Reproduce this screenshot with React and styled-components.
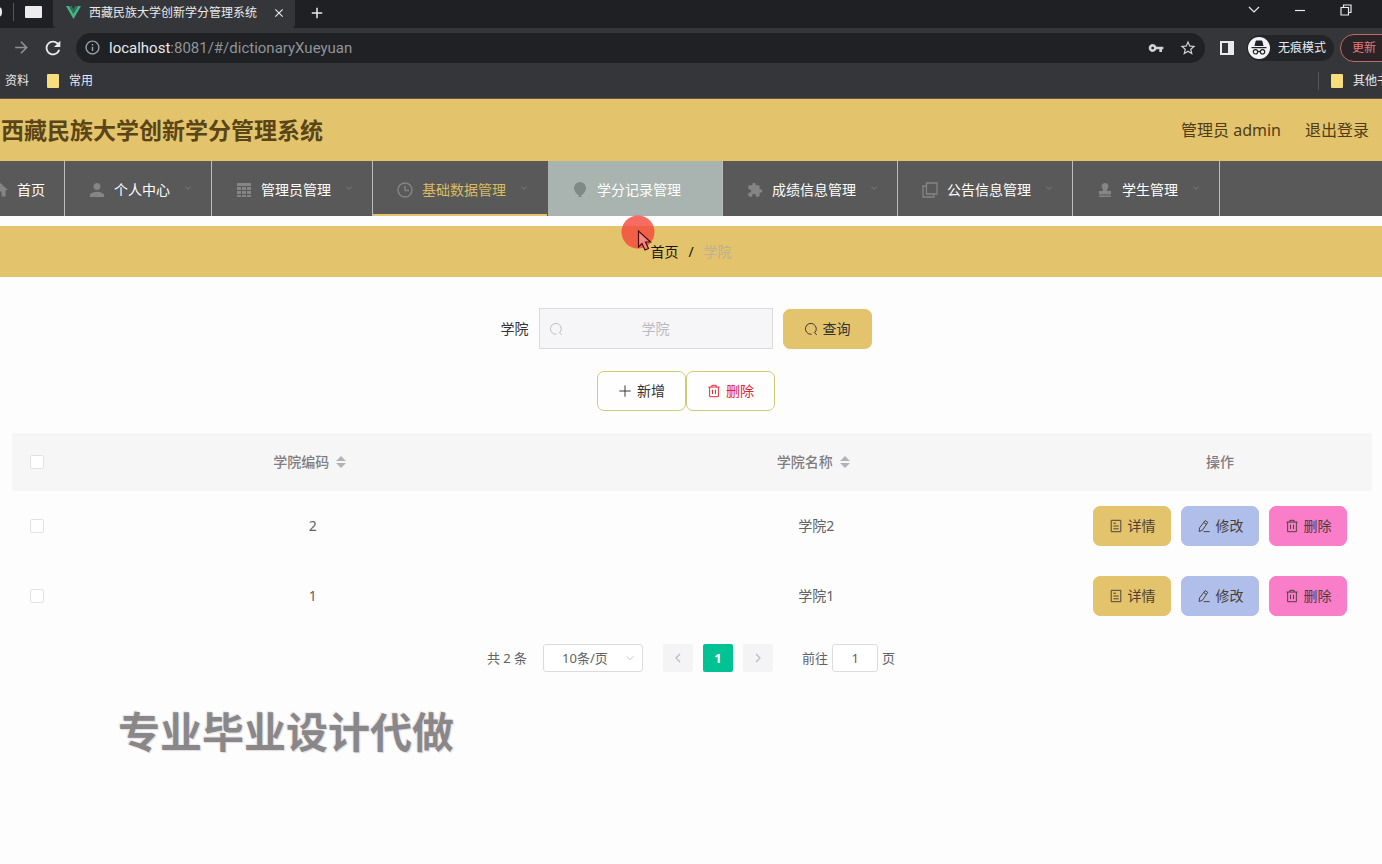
import React, { useState } from "react";
import styled, { createGlobalStyle, css } from "styled-components";
import {
    MdAdd,
    MdArrowForward,
    MdClose,
    MdExtension,
    MdHome,
    MdInfoOutline,
    MdPerson,
    MdRefresh,
    MdStarBorder,
    MdVpnKey,
} from "react-icons/md";

const gold = "#e3c36c";

const GlobalStyle = createGlobalStyle`
    * {
        box-sizing: border-box;
    }
    body {
        margin: 0;
        background-color: #fefdfe;
        color: #333;
        font-family: "Noto Sans", "Noto Sans CJK SC", sans-serif;
        font-size: 14px;
        line-height: 20px;
        overflow-x: hidden;
    }
    button, input, select {
        font: inherit;
        color: inherit;
        margin: 0;
    }
    button {
        cursor: pointer;
    }
    svg {
        display: block;
        flex: none;
    }
    a {
        color: inherit;
        text-decoration: none;
    }
`;

/* browser window */

const Browser = styled.div`
    overflow: hidden;
    white-space: nowrap;
    color: #e8eaed;
    font-size: 12px;
    background-color: #35363a;
    border-bottom: 1px solid #6b5146;
`;

const TabStrip = styled.div`
    display: flex;
    align-items: stretch;
    height: 28px;
    background-color: #1e2023;
`;

const OldTab = styled.div`
    display: flex;
    align-items: center;
    gap: 11px;
    width: 53px;
    padding-bottom: 4px;
`;

const TabDot = styled.span`
    width: 8px;
    height: 10px;
    margin-left: -6px;
    border: 2px solid #e8eaed;
    border-radius: 5px;
`;

const TabLine = styled.span`
    flex: none;
    width: 1px;
    height: 18px;
    background-color: #55575b;
`;

const TabPage = styled.span`
    width: 17px;
    height: 12px;
    border-radius: 1px;
    background-color: #ececee;
`;

const Tab = styled.div`
    display: flex;
    align-items: center;
    width: 242px;
    padding: 0 9px 3px 13px;
    border-radius: 0 0 4px 4px;
    background-color: #35363a;
`;

const TabTitle = styled.span`
    flex: 1;
    margin-left: 8px;
`;

const IconButton = styled.button`
    display: flex;
    align-items: center;
    padding: 0;
    border: none;
    background: none;
    color: ${({ $dim }) => ($dim ? "#8d9094" : "#e8eaed")};
`;

const NewTab = styled(IconButton)`
    margin-left: 13px;
    padding-bottom: 3px;
`;

const WindowButtons = styled.div`
    display: flex;
    align-items: center;
    gap: 34px;
    margin-left: auto;
    padding: 0 30px 9px 0;
`;

const Toolbar = styled.div`
    display: flex;
    align-items: center;
    height: 39px;
    padding-left: 12px;
`;

const Arrows = styled.div`
    display: flex;
    gap: 11px;
`;

const Omnibox = styled.div`
    display: flex;
    align-items: center;
    flex: 1;
    gap: 15px;
    height: 30px;
    margin: 0 14px 0 12px;
    padding: 0 8px;
    border-radius: 15px;
    background-color: #1f2124;
`;

const Url = styled.span`
    flex: 1;
    margin-left: -7px;
    color: #909499;
    font-family: Roboto, sans-serif;
    font-size: 15px;

    b {
        color: #e8eaed;
        font-weight: 400;
    }
`;

const Incognito = styled.div`
    display: flex;
    align-items: center;
    gap: 7px;
    height: 26px;
    margin-left: 12px;
    padding-right: 8px;
    border-radius: 13px;
    background-color: #222427;
`;

const Update = styled.button`
    width: 62px;
    height: 28px;
    margin: 0 -20px 0 6px;
    padding: 0 0 0 11px;
    border: 1px solid #c0686b;
    border-radius: 14px;
    background-color: #2a2427;
    color: #e5787a;
    text-align: left;
`;

const Bookmarks = styled.div`
    display: flex;
    align-items: center;
    height: 31px;
    padding: 0 0 3px 5px;
`;

const Folder = styled.span`
    flex: none;
    width: 12px;
    height: 14px;
    margin: 0 10px 0 ${({ $first }) => ($first ? 18 : 12)}px;
    border-radius: 1px;
    background-color: #f8dd7c;
`;

const OtherBookmarks = styled.div`
    display: flex;
    align-items: center;
    width: 64px;
    margin-left: auto;
`;

/* site header and menu */

const Header = styled.header`
    display: flex;
    justify-content: space-between;
    align-items: center;
    height: 62px;
    padding: 0 13px 0 1px;
    background-color: ${gold};
    color: #5a4517;
`;

const Title = styled.h1`
    margin: 0;
    font-size: 23px;
    line-height: 32px;
    font-weight: 700;
`;

const HeaderLinks = styled.div`
    display: flex;
    gap: 24px;
    font-size: 16px;
    color: #4f3d18;
`;

const Nav = styled.nav`
    display: flex;
    height: 55px;
    background-color: #595959;
    overflow: hidden;
`;

const NavList = styled.div`
    display: flex;
    margin-left: -32px;
`;

const NavItem = styled.a`
    display: flex;
    align-items: center;
    padding: 3px 19px 0 24px;
    border-right: 1px solid #bdbdbd;
    color: #fff;
    white-space: nowrap;

    svg:first-child {
        margin-right: 9px;
        color: #858585;
    }

    ${({ $active }) => $active && css`
        border-right-color: transparent;
        box-shadow: inset 0 -2px 0 ${gold};
        color: #d9bb62;
    `}

    ${({ $hover }) => $hover && css`
        background-color: #a9b3af;

        svg:first-child {
            color: #7f8a87;
        }
    `}
`;

const NavArrow = styled.span`
    width: 22px;
    padding: 0 0 4px 14px;
    color: #96506a;
    visibility: ${({ $hidden }) => ($hidden ? "hidden" : "visible")};
`;

const Breadcrumb = styled.div`
    position: relative;
    display: flex;
    justify-content: center;
    align-items: center;
    gap: 10px;
    height: 51px;
    margin-top: 10px;
    background-color: ${gold};
    color: #17140c;
`;

const Current = styled.span`
    color: #bfb090;
`;

const Pointer = styled.svg`
    position: absolute;
    top: -11px;
    left: calc(50% - 70px);
`;

/* content */

const Content = styled.main`
    padding: 31px 10px 0 12px;
`;

const FormRow = styled.form`
    display: flex;
    justify-content: center;
    align-items: center;
    margin-bottom: 22px;
    padding-right: 12px;
`;

const Label = styled.label`
    margin-right: 10px;
`;

const SearchBox = styled.div`
    display: flex;
    align-items: center;
    width: 234px;
    height: 41px;
    margin-right: 10px;
    padding: 0 9px;
    border: 1px solid #dcdade;
    background-color: #f6f5f7;
    color: #bcbabe;
`;

const SearchInput = styled.input`
    flex: 1;
    min-width: 0;
    padding: 0 14px 0 0;
    border: none;
    outline: none;
    background: none;
    text-align: center;

    &::placeholder {
        color: #bcbabe;
        opacity: 1;
    }
`;

const Button = styled.button`
    display: flex;
    justify-content: center;
    align-items: center;
    gap: 5px;
    width: 89px;
    height: 40px;
    padding: 0;
    border: 1px solid ${({ $bg }) => $bg || "#cfcb78"};
    border-radius: 7px;
    background-color: ${({ $bg }) => $bg || "#fffefe"};
    color: ${({ $color }) => $color || "#333"};
`;

const RowButton = styled(Button)`
    width: 78px;
    color: #4a4038;
`;

const Table = styled.table`
    width: 100%;
    border-collapse: collapse;
    table-layout: fixed;
    color: #606266;
    text-align: center;
`;

const Th = styled.th`
    width: ${({ $width }) => $width || "auto"};
    height: 58px;
    padding: 0;
    background-color: #f7f6f7;
    color: #7f7d80;
    font-weight: 500;
`;

const Td = styled.td`
    height: 70px;
    padding: 0;
`;

const Sortable = styled.div`
    display: flex;
    justify-content: center;
    align-items: center;
    gap: 7px;
    padding-right: 6px;
`;

const Check = styled.input`
    appearance: none;
    display: block;
    width: 14px;
    height: 14px;
    margin: 0 auto;
    border: 1px solid #e3e1e4;
    border-radius: 2px;
    background-color: #fff;

    &:checked {
        background-color: #00c292;
    }
`;

const Actions = styled.div`
    display: flex;
    justify-content: center;
    gap: 10px;
`;

const Pagination = styled.div`
    display: flex;
    justify-content: center;
    align-items: center;
    margin-top: 13px;
    padding-right: 2px;
    color: #606266;
    font-size: 13px;
`;

const SelectBox = styled.div`
    display: grid;
    align-items: center;
    width: 100px;
    margin: 0 20px 0 16px;

    > * {
        grid-area: 1 / 1;
    }
    svg {
        justify-self: end;
        margin-right: 8px;
        color: #c0c4cc;
        pointer-events: none;
    }
`;

const PageSize = styled.select`
    appearance: none;
    width: 100%;
    height: 28px;
    padding: 0 18px;
    border: 1px solid #dddbdf;
    border-radius: 3px;
    background-color: #fff;
`;

const PageButton = styled.button`
    display: flex;
    justify-content: center;
    align-items: center;
    width: 30px;
    height: 28px;
    margin-right: 10px;
    padding: 0;
    border: none;
    border-radius: 2px;
    background-color: ${({ $active }) => ($active ? "#00c292" : "#f4f3f5")};
    color: ${({ $active }) => ($active ? "#fff" : "#b9bbc0")};
    font-weight: 700;
`;

const Jump = styled.label`
    display: flex;
    align-items: center;
    gap: 4px;
    margin-left: 19px;
`;

const JumpInput = styled.input`
    width: 46px;
    height: 28px;
    padding: 0;
    border: 1px solid #dddbdf;
    border-radius: 3px;
    background-color: #fff;
    text-align: center;
`;

const Slogan = styled.p`
    margin: 28px 0 0 106px;
    color: #8a8789;
    font-size: 42px;
    line-height: 64px;
    font-weight: 700;
    text-shadow: 0 0 2px #fff, 1px 1px 1px #d4d2d4, -1px -1px 1px #e4e2e4;
`;

/* icons */

const Line = ({ size = 14, children, ...rest }) => (
    <svg width={size} height={size} viewBox="0 0 16 16" fill="none" stroke="currentColor" strokeWidth="1.1" {...rest}>
        {children}
    </svg>
);

const SearchIcon = () => (
    <Line>
        <path d="M12.200 12.200A6.200 6.200 0 1 0 7.600 14h1.200M11.600 11.800l3 3" />
    </Line>
);

const PlusIcon = () => <Line><path d="M8 1.500v13M1.500 8h13" /></Line>;

const TrashIcon = () => (
    <Line>
        <path d="M1.500 3.500h13M5.500 3.500v-2h5v2M3 3.500v11h10v-11M6.300 6.500v5M9.700 6.500v5" />
    </Line>
);

const DetailIcon = () => (
    <Line>
        <path d="M2.500 1.500h11v13h-11zM5 4.800h3M5 8h6M5 11.200h6" />
    </Line>
);

const EditIcon = () => (
    <Line>
        <path d="M9.300 1.800l3 2-6 9-3.900 1.600.5-4.200zM8 4.200l3 2M7.500 14.400h7" />
    </Line>
);

const SortIcon = () => (
    <svg width="10" height="12" viewBox="0 0 10 12" fill="#b4b2b6">
        <path d="M5 0l5 5H0zM5 12L0 7h10z" />
    </svg>
);

const Chevron = ({ d, size = 12 }) => (
    <svg width={size} height={size} viewBox="0 0 12 12" fill="none" stroke="currentColor" strokeWidth="1.2">
        <path d={d} />
    </svg>
);

const down = "M2 4l4 4 4-4";

const GridIcon = () => (
    <svg width="16" height="16" viewBox="0 0 16 16" fill="currentColor">
        <path d="M1 1h14v3H1zM1 5h4v3H1zM6 5h4v3H6zM11 5h4v3h-4zM1 9h4v3H1zM6 9h4v3H6zM11 9h4v3h-4zM1 13h4v2H1zM6 13h4v2H6zM11 13h4v2h-4z" />
    </svg>
);

const ClockIcon = () => (
    <Line size={16} strokeWidth="1.4">
        <circle cx="8" cy="8" r="7" />
        <path d="M8 3.800V8.500h4" />
    </Line>
);

const BalloonIcon = () => (
    <svg width="16" height="16" viewBox="0 0 16 16" fill="currentColor">
        <path d="M8 0a6 6 0 0 1 6 6c0 3.500-2.500 6-5 7.500l1 1.500H6l1-1.500C4.500 12 2 9.500 2 6a6 6 0 0 1 6-6z" />
    </svg>
);

const CopyIcon = () => (
    <Line size={16} strokeWidth="1.3">
        <path d="M4.500 1h10.500v11H4.500zM4.500 4H1v11h11v-3" />
    </Line>
);

const StampIcon = () => (
    <svg width="16" height="16" viewBox="0 0 16 16" fill="currentColor">
        <path d="M8 1a3.500 3.500 0 0 1 2.200 6.200V9H14v3.500H2V9h3.800V7.200A3.500 3.500 0 0 1 8 1zM2 13.500h12V15H2z" />
    </svg>
);

const VueLogo = () => (
    <svg width="15" height="13" viewBox="0 0 15 13">
        <path fill="#41b883" d="M0 0h3l4.500 7.800L12 0h3L7.500 13z" />
        <path fill="#34705e" d="M3 0h2.600l1.900 3.300L9.400 0H12L7.500 7.800z" />
    </svg>
);

const IncognitoIcon = () => (
    <svg width="24" height="24" viewBox="0 0 24 24">
        <circle cx="12" cy="12" r="11" fill="#f1f3f4" />
        <path fill="#202124" d="M8.500 5.500l.8-1h5.400l.8 1 1 4.500h-9zM4.500 11h15v1.200h-15z" />
        <g fill="none" stroke="#202124" strokeWidth="1.2">
            <circle cx="8.500" cy="15.800" r="2.200" />
            <circle cx="15.500" cy="15.800" r="2.200" />
            <path d="M10.700 15.500h2.600" />
        </g>
    </svg>
);

const menu = [
    { name: "首页", icon: <MdHome size={16} viewBox="2 2 20 20" />, single: true },
    { name: "个人中心", icon: <MdPerson size={16} viewBox="3 3 18 18" /> },
    { name: "管理员管理", icon: <GridIcon /> },
    { name: "基础数据管理", icon: <ClockIcon />, active: true },
    { name: "学分记录管理", icon: <BalloonIcon />, hover: true },
    { name: "成绩信息管理", icon: <MdExtension size={16} /> },
    { name: "公告信息管理", icon: <CopyIcon /> },
    { name: "学生管理", icon: <StampIcon /> },
];

const rows = [
    { code: 2, name: "学院2" },
    { code: 1, name: "学院1" },
];

const BrowserBar = () => (
    <Browser>
        <TabStrip>
            <OldTab>
                <TabDot />
                <TabLine />
                <TabPage />
            </OldTab>
            <Tab>
                <VueLogo />
                <TabTitle>西藏民族大学创新学分管理系统</TabTitle>
                <IconButton aria-label="关闭"><MdClose size={14} /></IconButton>
            </Tab>
            <NewTab aria-label="新标签页"><MdAdd size={18} /></NewTab>
            <WindowButtons>
                <IconButton aria-label="标签页"><Chevron d="M1 3l5 5 5-5" /></IconButton>
                <IconButton aria-label="最小化"><Chevron d="M1 6.500h10" /></IconButton>
                <IconButton aria-label="还原"><Chevron d="M1 3.500h7.500V11H1zM3.500 3.500V1H11v7.500H8.500" /></IconButton>
            </WindowButtons>
        </TabStrip>
        <Toolbar>
            <Arrows>
                <IconButton $dim aria-label="前进"><MdArrowForward size={19} /></IconButton>
                <IconButton aria-label="刷新"><MdRefresh size={22} /></IconButton>
            </Arrows>
            <Omnibox>
                <MdInfoOutline size={17} color="#9aa0a6" />
                <Url><b>localhost</b>:8081/#/dictionaryXueyuan</Url>
                <MdVpnKey size={16} color="#d0d2d5" />
                <MdStarBorder size={18} color="#d0d2d5" />
            </Omnibox>
            <svg width="16" height="16" viewBox="0 0 16 16">
                <path fill="#e8eaed" fillRule="evenodd" d="M1 1h14v14H1zM3 3v10h6V3z" />
            </svg>
            <Incognito>
                <IncognitoIcon />
                无痕模式
            </Incognito>
            <Update>更新</Update>
        </Toolbar>
        <Bookmarks>
            资料
            <Folder $first />
            常用
            <OtherBookmarks>
                <TabLine />
                <Folder />
                其他书签
            </OtherBookmarks>
        </Bookmarks>
    </Browser>
);

export default function App() {
    const [search, setSearch] = useState("");
    const [page, setPage] = useState("1");

    return (
        <>
            <GlobalStyle />
            <BrowserBar />
            <Header>
                <Title>西藏民族大学创新学分管理系统</Title>
                <HeaderLinks>
                    <span>管理员 admin</span>
                    <a href="#/login">退出登录</a>
                </HeaderLinks>
            </Header>
            <Nav>
                <NavList>
                    {menu.map((item) => (
                        <NavItem key={item.name} href="#/" $active={item.active} $hover={item.hover}>
                            {item.icon}
                            {item.name}
                            {!item.single && (
                                <NavArrow $hidden={item.hover}><Chevron d={down} size={8} /></NavArrow>
                            )}
                        </NavItem>
                    ))}
                </NavList>
            </Nav>
            <Breadcrumb>
                <a href="#/">首页</a>
                <span>/</span>
                <Current>学院</Current>
                <Pointer width="34" height="38" viewBox="0 0 34 38">
                    <circle cx="17" cy="17" r="16.500" fill="#f4473c" fillOpacity="0.8" />
                    <path d="M17.500 16v16l3.500-3.500 3 6.500 3.500-1.500-3-6.500h5z" fill="#f58a80" stroke="#4a0d12" strokeWidth="1.2" />
                </Pointer>
            </Breadcrumb>
            <Content>
                <FormRow onSubmit={(e) => e.preventDefault()}>
                    <Label htmlFor="search">学院</Label>
                    <SearchBox>
                        <SearchIcon />
                        <SearchInput
                            id="search"
                            placeholder="学院"
                            value={search}
                            onChange={(e) => setSearch(e.target.value)}
                        />
                    </SearchBox>
                    <Button $bg={gold}><SearchIcon />查询</Button>
                </FormRow>
                <FormRow as="div">
                    <Button><PlusIcon />新增</Button>
                    <Button $color="#e02434"><TrashIcon />删除</Button>
                </FormRow>
                <Table>
                    <thead>
                        <tr>
                            <Th $width="49px"><Check type="checkbox" aria-label="全选" /></Th>
                            <Th><Sortable>学院编码<SortIcon /></Sortable></Th>
                            <Th><Sortable>学院名称<SortIcon /></Sortable></Th>
                            <Th $width="304px">操作</Th>
                        </tr>
                    </thead>
                    <tbody>
                        {rows.map((row) => (
                            <tr key={row.code}>
                                <Td><Check type="checkbox" aria-label={row.name} /></Td>
                                <Td>{row.code}</Td>
                                <Td>{row.name}</Td>
                                <Td>
                                    <Actions>
                                        <RowButton $bg={gold}><DetailIcon />详情</RowButton>
                                        <RowButton $bg="#b0bfea"><EditIcon />修改</RowButton>
                                        <RowButton $bg="#fa7dca"><TrashIcon />删除</RowButton>
                                    </Actions>
                                </Td>
                            </tr>
                        ))}
                    </tbody>
                </Table>
                <Pagination>
                    <span>共 2 条</span>
                    <SelectBox>
                        <PageSize aria-label="每页条数">
                            <option>10条/页</option>
                            <option>20条/页</option>
                        </PageSize>
                        <Chevron d={down} size={10} />
                    </SelectBox>
                    <PageButton aria-label="上一页"><Chevron d="M8 2L4 6l4 4" /></PageButton>
                    <PageButton $active>1</PageButton>
                    <PageButton aria-label="下一页"><Chevron d="M4 2l4 4-4 4" /></PageButton>
                    <Jump>
                        前往
                        <JumpInput value={page} onChange={(e) => setPage(e.target.value)} />
                        页
                    </Jump>
                </Pagination>
                <Slogan>专业毕业设计代做</Slogan>
            </Content>
        </>
    );
}
